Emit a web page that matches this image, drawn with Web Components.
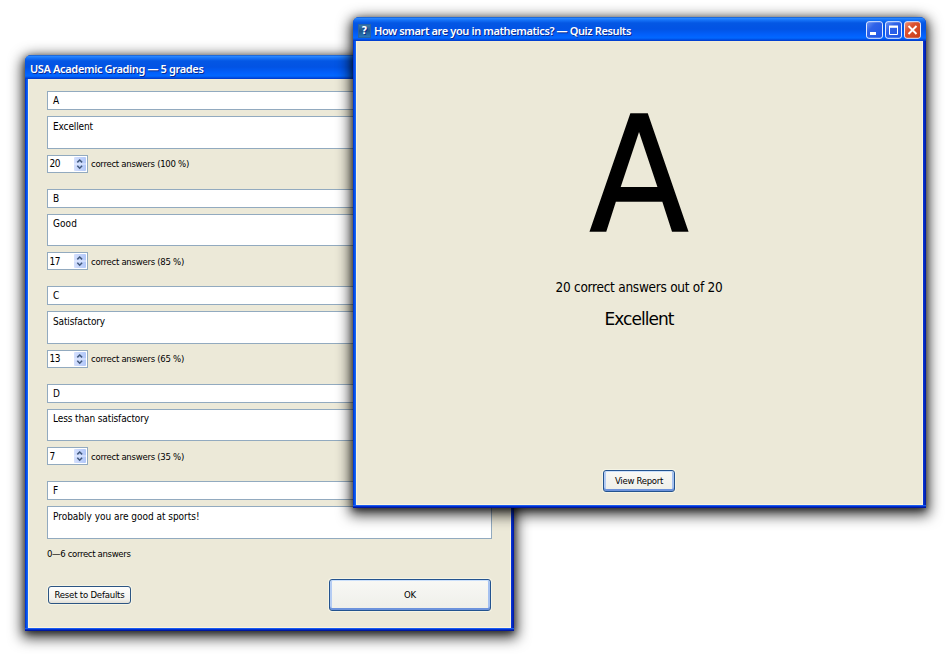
<!DOCTYPE html>
<html lang="en">
<head>
<meta charset="utf-8">
<title>Quiz Results</title>
<style>
html, body { margin: 0; background: #fff; overflow: hidden; }
body { width: 950px; height: 655px; font-family: "DejaVu Sans Condensed", "DejaVu Sans", sans-serif; font-stretch: condensed; color: #000; }
</style>
</head>
<body>
<quiz-desktop></quiz-desktop>
<script>
const define = (name, html, ready) => customElements.define(name, class extends HTMLElement {
  connectedCallback() {
    if (this.shadowRoot) return;
    const t = document.createElement('template');
    t.innerHTML = html;
    this.attachShadow({ mode: 'open' }).append(t.content.cloneNode(true));
    if (ready) ready(this, this.shadowRoot);
  }
});

/* One line of text, tracked so that it takes the width given in its "w" attribute. */
define('fit-text', `
<style>:host{display:inline-block;white-space:nowrap;line-height:1.2}span{display:inline-block}</style>
<span></span>`, (el, root) => {
  const s = root.querySelector('span');
  s.textContent = el.getAttribute('text');
  const w = +el.getAttribute('w');
  if (w) {
    el.style.width = w + 'px';
    s.style.letterSpacing = (w - s.getBoundingClientRect().width) / s.textContent.length + 'px';
  }
});

define('xp-window', `
<style>
:host{display:flex;flex-direction:column;position:absolute;box-sizing:border-box;border-radius:6px 6px 0 0;
 background:linear-gradient(0deg,#0018a0 0,#0018a0 1px,#0030cc 1px,#0030cc 2px,#1c5cf0 2px,#1c5cf0 3px,transparent 3px),linear-gradient(90deg,#001ec0 0,#0453ea 1px,#0453ea 2px,#2a76fa 3px,transparent 3px,transparent calc(100% - 4px),#3a78f8 calc(100% - 4px),#0838dc calc(100% - 3px),#0018a0 100%),#0640dc;
 box-shadow:0 4px 14px 3px rgba(0,0,0,.75),0 2px 6px 0 rgba(0,0,0,.5);padding:0 3px 3px 3px}
header{display:flex;align-items:center;box-sizing:border-box;flex:none;height:24px;margin:0 -3px;padding:3px 4px 0 5px;gap:3px;border-radius:6px 6px 0 0;
 background:linear-gradient(#0a48b8 0,#2f8cff 1px,#1673f8 3px,#0457e4 6px,#0253e4 12px,#0260fc 18px,#0268ff 21px,#0148dc 23px,#0038c8 24px);
 color:#fff;font:600 11px "Noto Sans","Open Sans",sans-serif;text-shadow:1px 1px 0 #0a2a90}
.c{margin-left:auto;display:flex;margin-top:-1px}
main{flex:1;min-height:0;background:#ece9d8;box-sizing:border-box;border:1px solid #fbf4dc;border-top-color:#f2ecd4;display:flex;flex-direction:column}
</style>
<header><slot name="icon"></slot><slot name="title"></slot><div class="c"><slot name="controls"></slot></div></header>
<main><slot></slot></main>`);

define('help-icon', `
<style>:host{display:block;width:13px;height:14px;box-sizing:border-box;background:linear-gradient(#3e7aa8,#1d568c 50%,#2a78b8);border:1px solid #2a64a4;color:#fff;font:bold 10px/12px "DejaVu Sans",sans-serif;text-align:center}</style>?`);

define('window-controls', `
<style>:host{display:flex}svg{display:block;width:57px;height:18px}</style>
<svg viewBox="0 0 57 18">
<defs>
<linearGradient id="b" x1="0" y1="0" x2="1" y2="1"><stop offset="0" stop-color="#7096f4"/><stop offset=".35" stop-color="#2f62e8"/><stop offset="1" stop-color="#1c54e6"/></linearGradient>
<linearGradient id="r" x1="0" y1="0" x2="1" y2="1"><stop offset="0" stop-color="#f09a80"/><stop offset=".35" stop-color="#dc5230"/><stop offset="1" stop-color="#c83c14"/></linearGradient>
</defs>
<g stroke="#e4ecff"><rect x="1.5" y=".7" width="16" height="16.6" rx="2.4" fill="url(#b)"/><rect x="20.5" y=".7" width="16" height="16.6" rx="2.4" fill="url(#b)"/><rect x="39.5" y=".7" width="16" height="16.6" rx="2.4" fill="url(#r)"/></g>
<path d="M5 11h6v3H5z" fill="#fff"/>
<path d="M24.5 5.5h8v8h-8z" fill="none" stroke="#fff"/><path d="M24 4.5h9v2.3h-9z" fill="#fff"/>
<path d="M43.5 5l8 8M51.5 5l-8 8" fill="none" stroke="#fff" stroke-width="1.9"/>
</svg>`);

define('text-field', `
<style>:host{display:block;box-sizing:border-box;background:#fff;border:1px solid #92aabf;height:19px;padding:3px 5px 0;font-size:10px}
:host([multi]){height:32.3px;padding-top:3.6px}</style>
<slot></slot>`);

define('spin-box', `
<style>:host{display:flex;box-sizing:border-box;width:41px;height:18px;background:#fff;border:1px solid #92aabf;padding:1px 1px 1px 2px;justify-content:space-between;font-size:10px}
fit-text{display:block}
::slotted(fit-text){margin:1.4px 0 0 -.5px}
svg{display:block;width:12px;height:14px}</style>
<slot></slot>
<svg viewBox="0 0 12 14"><defs><linearGradient id="g"><stop offset="0" stop-color="#d5e0fd"/><stop offset="1" stop-color="#b1c7f9"/></linearGradient></defs>
<rect width="12" height="14" rx="1" fill="url(#g)"/><path d="M0 7h12" stroke="#e6edff"/><path d="M3.3 5.4L5.7 3l2.4 2.4M3.3 8.8l2.4 2.4 2.4-2.4" fill="none" stroke="#42597d" stroke-width="1.5"/></svg>`);

define('grade-group', `
<style>:host{display:flex;flex-direction:column;height:97.5px;gap:6.3px}
.row{display:flex;align-items:center;gap:3px;height:18px;font-size:9.5px}</style>
<text-field class="n"></text-field><text-field class="d" multi></text-field><div class="row"></div>`, (el, root) => {
  const a = n => el.getAttribute(n);
  root.querySelector('.n').innerHTML = `<fit-text text="${a('grade')}"></fit-text>`;
  root.querySelector('.d').innerHTML = `<fit-text text="${a('note')}" w="${a('nw')}"></fit-text>`;
  root.querySelector('.row').innerHTML =
    (a('count') ? `<spin-box><fit-text text="${a('count')}" w="${a('cw') || 10.5}"></fit-text></spin-box>` : '') +
    `<fit-text text="${a('label')}" w="${a('lw')}"></fit-text>`;
});

define('xp-button', `
<style>:host{display:flex;align-items:center;justify-content:center;box-sizing:border-box;border:1px solid #2c5583;border-radius:3px;background:linear-gradient(#fefefd,#f2f2ee 75%,#e2dfd6);font-size:9.5px;box-shadow:0 0 0 1px rgba(250,248,235,.7)}
:host([primary]){border-color:#23538f;background:linear-gradient(#f8f8f5,#eeefe9);box-shadow:inset 0 1px 0 #cbe0fb,inset 0 -2px 0 #6d93dc,inset 2px 0 0 #b4ccf3,inset -2px 0 0 #a5c1f0,0 0 0 1px rgba(250,248,235,.7)}</style>
<slot></slot>`);

define('grading-dialog', `
<style>:host{display:block}
xp-window{left:25px;top:55px;width:489px;height:576px}
.body{display:flex;flex-direction:column;padding:11px 18px 0 18px}
.foot{display:flex;justify-content:space-between;align-items:center;padding-right:1px;padding-left:1px}
.reset{width:83px;height:18px}.ok{width:162px;height:32px}</style>
<xp-window>
<fit-text slot="title" text="USA Academic Grading — 5 grades" w="173.5"></fit-text>
<div class="body">
<grade-group grade="A" note="Excellent" nw="40" count="20" label="correct answers (100 %)" lw="98"></grade-group>
<grade-group grade="B" note="Good" nw="24" count="17" label="correct answers (85 %)" lw="93"></grade-group>
<grade-group grade="C" note="Satisfactory" nw="52" count="13" label="correct answers (65 %)" lw="93"></grade-group>
<grade-group grade="D" note="Less than satisfactory" nw="96" count="7" cw="6" label="correct answers (35 %)" lw="93"></grade-group>
<grade-group grade="F" note="Probably you are good at sports!" nw="146.5" label="0—6 correct answers" lw="83.5"></grade-group>
<div class="foot"><xp-button class="reset"><fit-text text="Reset to Defaults" w="70"></fit-text></xp-button>
<xp-button class="ok" primary><fit-text text="OK" w="12"></fit-text></xp-button></div>
</div></xp-window>`);

define('results-dialog', `
<style>:host{display:block}
xp-window{left:353px;top:17px;width:573px;height:491px}
.body{display:flex;flex-direction:column;align-items:center;flex:1;padding-right:1px}
.grade{font-size:161px;line-height:190px;margin-top:39px;-webkit-text-stroke:1.6px #000}
.score{font-size:13.5px;margin-top:8px}.note{font:17px "DejaVu Sans",sans-serif;font-stretch:normal;margin-top:14px;line-height:20px}
xp-button{width:72px;height:22px;margin-top:auto;margin-bottom:12px}</style>
<xp-window>
<help-icon slot="icon"></help-icon>
<fit-text slot="title" text="How smart are you in mathematics? — Quiz Results" w="257"></fit-text>
<window-controls slot="controls"></window-controls>
<div class="body"><div class="grade">A</div>
<fit-text class="score" text="20 correct answers out of 20" w="167"></fit-text>
<fit-text class="note" text="Excellent" w="69"></fit-text>
<xp-button primary><fit-text text="View Report" w="48"></fit-text></xp-button></div>
</xp-window>`);

define('quiz-desktop', `
<style>:host{display:block;position:relative;width:950px;height:655px;overflow:hidden}</style>
<grading-dialog></grading-dialog><results-dialog></results-dialog>`);
</script>
</body>
</html>
